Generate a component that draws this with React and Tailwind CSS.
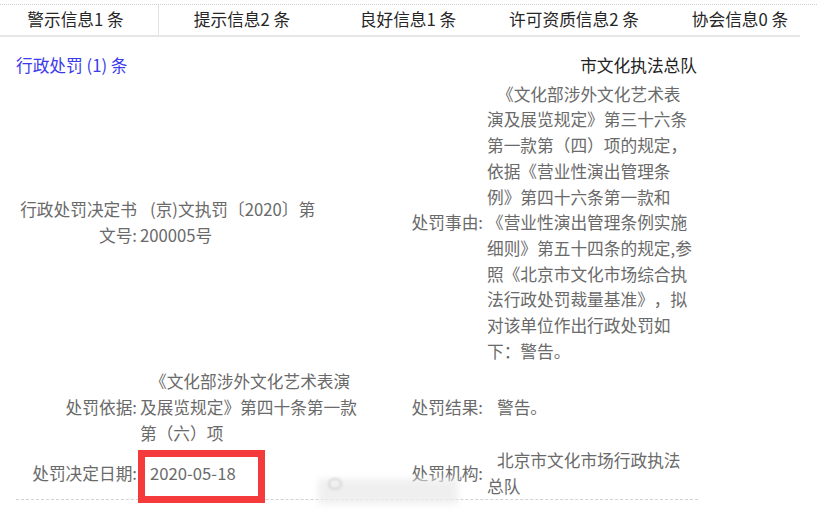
import React from 'react';

const tabs = ['警示信息1 条', '提示信息2 条', '良好信息1 条', '许可资质信息2 条', '协会信息0 条'];

function Row({ leftLabel, leftValue, rightLabel, rightValue, className = '' }) {
  return (
    <div className={`flex w-[682px] items-center ${className}`}>
      <div className="w-[123px] shrink-0 pr-[2px] text-right">{leftLabel}</div>
      <div className="w-[223px] shrink-0 pl-[1px] indent-[10px]">{leftValue}</div>
      <div className="w-[125px] shrink-0 pr-[4px] text-right">{rightLabel}</div>
      <div className="w-[207px] shrink-0 indent-[10px]">{rightValue}</div>
    </div>
  );
}

export default function App() {
  return (
    <div className="relative h-[512px] w-[817px] overflow-hidden bg-white font-['Noto_Sans_CJK_SC',sans-serif] text-[16.7px] leading-[25.7px] text-[#6a6a6a] [text-spacing-trim:space-all]">
      {/* 顶部标签栏 */}
      <div className="mt-[4px] border-t border-dotted border-[#cfcfcf]">
        <div className="flex h-[32px] w-[800px] overflow-hidden border-b-[2px] border-[#e6e6e6]">
          <div className="-ml-[7px] flex">
            {tabs.map((t, i) => (
              <div
                key={t}
                className={
                  i === 0
                    ? 'flex w-[166px] shrink-0 items-center justify-center border-r border-[#e2e2e2] text-[#262626]'
                    : 'flex w-[166px] shrink-0 items-center justify-center text-[#262626]'
                }
              >
                {t}
              </div>
            ))}
          </div>
        </div>
      </div>

      <div className="mt-[16px] flex w-[697px] justify-between pl-[16px]">
        <span className="text-[#3b3bea]">行政处罚 (1) 条</span>
        <span className="text-[#222]">市文化执法总队</span>
      </div>

      <div className="mt-[3px] ml-[16px]">
        <Row
          className="mb-[5px]"
          leftLabel="行政处罚决定书文号:"
          leftValue="(京)文执罚〔2020〕第200005号"
          rightLabel="处罚事由:"
          rightValue="《文化部涉外文化艺术表演及展览规定》第三十六条第一款第（四）项的规定，依据《营业性演出管理条例》第四十六条第一款和《营业性演出管理条例实施细则》第五十四条的规定,参照《北京市文化市场综合执法行政处罚裁量基准》，拟对该单位作出行政处罚如下：警告。"
        />
        <Row
          className="mb-[1.5px]"
          leftLabel="处罚依据:"
          leftValue="《文化部涉外文化艺术表演及展览规定》第四十条第一款第（六）项"
          rightLabel="处罚结果:"
          rightValue="警告。"
        />
        <Row
          className="border-b border-dashed border-[#d2d2d2]"
          leftLabel="处罚决定日期:"
          leftValue="2020-05-18"
          rightLabel="处罚机构:"
          rightValue="北京市文化市场行政执法总队"
        />
      </div>

      {/* 模糊水印 */}
      <div className="absolute left-[318px] top-[479px] h-[25px] w-[140px] bg-[#ececec] opacity-80 blur-[3px]" />
      <div className="absolute left-[328px] top-[478px] h-[12px] w-[14px] rounded-full border-2 border-[#d6d6d6] blur-[1px]" />

      {/* 红色标注框 */}
      <div className="absolute left-[138px] top-[450px] h-[53px] w-[127px] border-[7px] border-[#f43a3a]" />
    </div>
  );
}
